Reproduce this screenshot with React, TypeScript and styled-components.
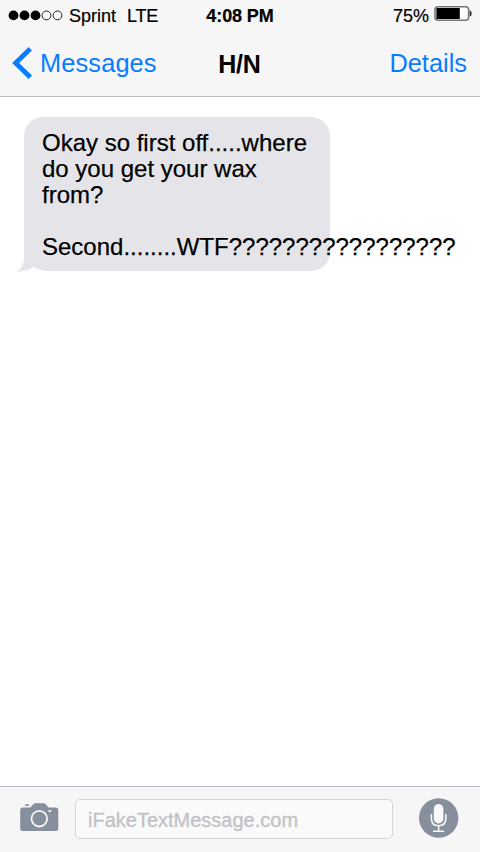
import React from 'react';
import styled, { createGlobalStyle } from 'styled-components';

const GlobalStyle = createGlobalStyle`
  * { box-sizing: border-box; }
  body { margin: 0; background: #fff; font-family: "Liberation Sans", Helvetica, Arial, sans-serif; color: #000; }
`;

const Screen = styled.div`
  width: 480px;
  height: 852px;
  display: flex;
  flex-direction: column;
  overflow: hidden;
  background: #fff;
`;

const Header = styled.header`
  flex: none;
  height: 97px;
  background: #f6f6f6;
  border-bottom: 1px solid #bebebe;
`;

const StatusBar = styled.div`
  display: grid;
  grid-template-columns: 1fr auto 1fr;
  height: 32px;
  padding: 0 9px;
  line-height: 32px;
  font-size: 18px;
  -webkit-text-stroke: 0.2px #000;
`;

const StatusGroup = styled.div<{ $end?: boolean }>`
  display: flex;
  justify-content: ${(p) => (p.$end ? 'flex-end' : 'flex-start')};
  white-space: nowrap;
`;

const SignalDots = styled.svg`
  flex: none;
  margin: 9px 6px 0 -1px;
`;

const Carrier = styled.span`
  margin-right: 11px;
`;

const Network = styled.span`
  letter-spacing: -0.2px;
`;

const Clock = styled.span`
  font-weight: bold;
  letter-spacing: -0.1px;
`;

const Battery = styled.svg`
  flex: none;
  margin: 5px -2px 0 5px;
`;

const NavBar = styled.nav`
  display: grid;
  grid-template-columns: 1fr auto 1fr;
  height: 64px;
  padding: 0 13px 0 12px;
  line-height: 63px;
  font-size: 25.4px;
`;

const NavLink = styled.a<{ $end?: boolean }>`
  display: flex;
  justify-content: ${(p) => (p.$end ? 'flex-end' : 'flex-start')};
  color: #087dff;
  letter-spacing: ${(p) => (p.$end ? '0' : '0.12px')};
`;

const BackArrow = styled.svg`
  flex: none;
  margin: 15px 7px 0 0;
`;

const Title = styled.h1`
  margin: 0;
  font-size: 25px;
  line-height: 65px;
  letter-spacing: -0.2px;
`;

const Conversation = styled.main`
  flex: 1;
  padding: 20px 0 0 24px;
`;

const Bubble = styled.div`
  position: relative;
  width: 306px;
  height: 154px;
  padding: 13px 18px;
  border-radius: 19px 19px 19px 23px;
  background: #e5e4e9;
  font-size: 24px;
  line-height: 26px;
  white-space: pre;
  text-shadow: 0 1px 0 rgba(255, 255, 255, 0.5);
  -webkit-text-stroke: 0.25px #000;
`;

const Tail = styled.svg`
  position: absolute;
  left: -8px;
  bottom: -1px;
`;

const MessageText = styled.p`
  position: relative;
  margin: 0;
`;

const Composer = styled.footer`
  flex: none;
  display: flex;
  height: 66px;
  padding: 0 21px 0 20px;
  background: #f6f6f6;
  border-top: 1px solid #b9bac1;
`;

const Camera = styled.svg`
  flex: none;
  margin-top: 15px;
`;

const Field = styled.div`
  width: 318px;
  height: 40px;
  margin: 12px 26px 0 16px;
  padding-left: 12px;
  border: 1px solid #d3d4d6;
  border-radius: 5px;
  background: #fafafa;
  color: #c2c2c7;
  font-size: 20px;
  line-height: 41px;
  -webkit-text-stroke: 0.35px #c2c2c7;
`;

const Mic = styled.svg`
  flex: none;
  margin-top: 11px;
`;

const message = `Okay so first off.....where
do you get your wax
from?

Second........WTF?????????????????`;

export default function App() {
  return (
    <>
      <GlobalStyle />
      <Screen>
        <Header>
          <StatusBar>
            <StatusGroup>
              <SignalDots width="55" height="12" viewBox="0 0 55 12">
                {[5.5, 16.5, 27.5].map((x) => (
                  <circle key={x} cx={x} cy="6.4" r="4.9" />
                ))}
                {[38.5, 49.5].map((x) => (
                  <circle key={x} cx={x} cy="6.4" r="4.4" fill="none" stroke="#222" />
                ))}
              </SignalDots>
              <Carrier>Sprint</Carrier>
              <Network>LTE</Network>
            </StatusGroup>
            <Clock>4:08 PM</Clock>
            <StatusGroup $end>
              75%
              <Battery width="39" height="17" viewBox="0 0 39 17">
                <rect x="1" y="1.8" width="33.6" height="13.4" rx="3" fill="#fff" stroke="#777" strokeWidth="1.6" />
                <rect x="2.4" y="3" width="23.4" height="11" />
                <path d="M35.6 5.5q2 0 2 3t-2 3z" fill="#333" />
              </Battery>
            </StatusGroup>
          </StatusBar>
          <NavBar>
            <NavLink>
              <BackArrow width="21" height="32" viewBox="0 0 21 32">
                <path d="M18.3 1.8 3.6 16l14.7 14.2" fill="none" stroke="#087dff" strokeWidth="4.8" />
              </BackArrow>
              Messages
            </NavLink>
            <Title>H/N</Title>
            <NavLink $end>Details</NavLink>
          </NavBar>
        </Header>
        <Conversation>
          <Bubble>
            <Tail width="34" height="24" viewBox="0 0 34 24">
              <path d="M8 0V12Q7 20 .5 23.6Q11 24 18.2 18.6L20 10V0Z" fill="#e5e4e9" />
            </Tail>
            <MessageText>{message}</MessageText>
          </Bubble>
        </Conversation>
        <Composer>
          <Camera width="39" height="30" viewBox="0 0 39 30">
            <path
              d="M2.5 5.5H10.5L13 2.5Q14 1.3 15.5 1.3H23.5Q25 1.3 26 2.5L28.5 5.5H36Q38.3 5.5 38.3 8V26.5Q38.3 29 36 29H2.5Q.2 29 .2 26.5V8Q.2 5.5 2.5 5.5Z"
              fill="#868f9b"
            />
            <rect x="5" y="2.3" width="4" height="1.7" rx=".8" fill="#868f9b" />
            <circle cx="19.3" cy="16.7" r="7.8" fill="none" stroke="#f6f6f6" strokeWidth="1.8" />
            <rect x="28.3" y="8.3" width="3" height="1.6" rx=".6" fill="#f6f6f6" />
          </Camera>
          <Field>iFakeTextMessage.com</Field>
          <Mic width="40" height="40" viewBox="0 0 40 40">
            <circle cx="19.7" cy="20" r="19.7" fill="#868f9b" />
            <rect x="14.8" y="6" width="9.6" height="19.5" rx="4.8" fill="#f8f9fa" />
            <path d="M12.4 16v4.5q0 7.3 7.2 7.3t7.2-7.3V16M19.6 28v5M14 33.2h11.2" fill="none" stroke="#f6f6f6" strokeWidth="1.6" />
          </Mic>
        </Composer>
      </Screen>
    </>
  );
}
